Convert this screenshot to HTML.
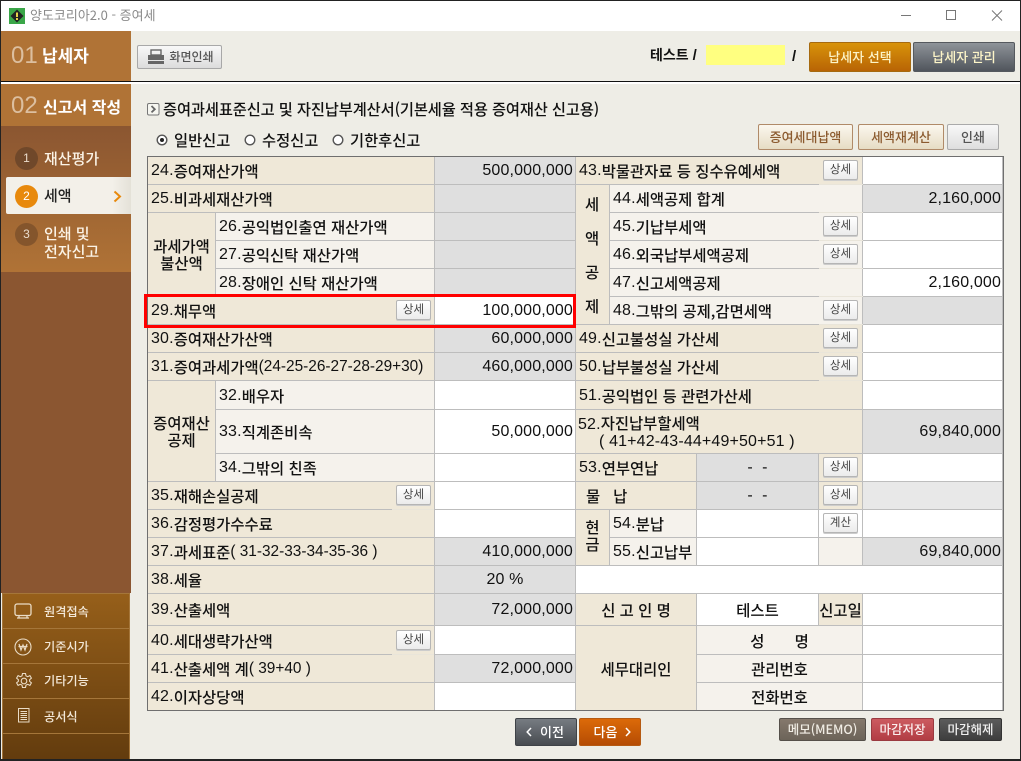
<!DOCTYPE html>
<html lang="ko"><head><meta charset="utf-8"><title>양도코리아2.0 - 증여세</title>
<style>
*{box-sizing:border-box;margin:0;padding:0}
html,body{width:1021px;height:761px;overflow:hidden;background:#222}
body{position:relative;font-family:"Noto Sans CJK KR","Liberation Sans",sans-serif;font-size:15.4px;color:#111}
div,span.t,span.n,svg{position:absolute}
i{font-style:normal;font-family:"Liberation Sans",sans-serif;font-size:16px;letter-spacing:.15px;font-weight:400}
i.p{font-size:15.4px;letter-spacing:0}
.t{white-space:nowrap;line-height:18px}
.c{display:flex;align-items:center;white-space:nowrap;border-right:1px solid #bdbdbd;border-bottom:1px solid #bdbdbd;padding-left:3px;padding-top:1px;line-height:18px;font-weight:500}
.a{background:#efe8d8}.b{background:#f5f2ec}.g{background:#dfdfdf}.w{background:#fff}
.r{justify-content:flex-end;padding:1px 1px 0 0}
[style*="left:435px"].r{padding-right:2px}
.m{justify-content:center;padding:1px 0 0;text-align:center}
.d{width:35px;height:20px;border:1px solid #b5b5b5;border-radius:2px;background:linear-gradient(#fff,#ebebeb);font-size:11.5px;line-height:17px;text-align:center;color:#444;box-shadow:0 1px 0 #ccc}
.n{color:#f3e8d8;font-size:12.2px;font-weight:500;left:44px;line-height:16px;white-space:nowrap}
.btn{text-align:center;white-space:nowrap;border-radius:2px;font-weight:500}
.e{height:1px;background:#e9e5da;width:44px;left:819px}
.s{color:#fbf3e6;font-weight:500;font-size:15px}
b{font-family:"Liberation Sans",sans-serif;font-weight:700;font-size:15px}
</style></head><body>
<div style="left:1px;top:1px;width:1019px;height:758px;background:#eeede6;overflow:hidden"></div>
<!-- title bar -->
<div style="left:1px;top:1px;width:1019px;height:30px;background:#fff"></div>
<svg style="left:9px;top:8px" width="16" height="16" viewBox="0 0 16 16"><rect width="16" height="16" fill="#3aa648"/><path d="M8 1.5 14.5 8 8 14.5 1.5 8Z" fill="#222"/><rect x="7" y="4.5" width="2" height="4.5" fill="#e9d24a"/><rect x="7" y="10" width="2" height="2" fill="#e9d24a"/></svg>
<span class="t" style="left:30px;top:6px;color:#8a8a8a;font-size:13px">양도코리아2.0 - 증여세</span>
<svg style="left:900px;top:8px" width="110" height="15" viewBox="0 0 110 15" fill="none" stroke="#777"><path d="M1 7.5H11"/><rect x="46.5" y="2.5" width="9" height="9"/><path d="M92 2.5 102 12.5M102 2.5 92 12.5"/></svg>
<!-- header -->
<div style="left:1px;top:81px;width:1019px;height:1px;background:#111"></div>
<div style="left:1px;top:82px;width:1019px;height:2px;background:#fff"></div>
<!-- sidebar -->
<div style="left:1px;top:31px;width:130px;height:50px;background:#b07336"></div>
<span class="t" style="left:11px;top:42px;font:24px/28px 'Liberation Sans',sans-serif;color:#dcbfa0">01</span>
<span class="t" style="left:42px;top:46px;font-size:17px;font-weight:700;color:#fff">납세자</span>
<div style="left:1px;top:84px;width:130px;height:42px;background:#b07336"></div>
<span class="t" style="left:11px;top:92px;font:24px/28px 'Liberation Sans',sans-serif;color:#dcbfa0">02</span>
<span class="t" style="left:43px;top:97px;font-size:16px;font-weight:700;color:#fff">신고서 작성</span>
<div style="left:1px;top:126px;width:130px;height:467px;background:#8b5631"></div>
<div style="left:1px;top:126px;width:130px;height:146px;background:linear-gradient(#8b5631,#b07336)"></div>
<div style="left:6px;top:177px;width:125px;height:37px;background:linear-gradient(90deg,#f3f0e9 85%,#e4e1d8);border-radius:2px 0 0 2px"></div>
<div style="left:15px;top:147px;width:23px;height:23px;border-radius:50%;background:#70482a;color:#eadccc;font:12px/23px 'Liberation Sans',sans-serif;text-align:center">1</div>
<span class="t s" style="left:44px;top:150px">재산평가</span>
<div style="left:15px;top:185px;width:23px;height:23px;border-radius:50%;background:#e8890c;color:#fff;font:12px/23px 'Liberation Sans',sans-serif;text-align:center">2</div>
<span class="t s" style="left:44px;top:187px;color:#222">세액</span>
<svg style="left:113px;top:190px" width="9" height="13" viewBox="0 0 9 13" fill="none" stroke="#e8890c" stroke-width="2"><path d="M1.5 1.5 7 6.5 1.5 11.5"/></svg>
<div style="left:15px;top:223px;width:23px;height:23px;border-radius:50%;background:#84552c;color:#eadccc;font:12px/23px 'Liberation Sans',sans-serif;text-align:center">3</div>
<span class="t s" style="left:44px;top:225px">인쇄 및</span>
<span class="t s" style="left:44px;top:243px">전자신고</span>
<div style="left:2px;top:593px;width:128px;height:166px;background:linear-gradient(#965f1a,#633c0e);border:1px solid #a5763a;border-bottom:0"></div>
<div style="left:2px;top:628px;width:128px;height:1px;background:#a5763a"></div>
<div style="left:2px;top:663px;width:128px;height:1px;background:#a5763a"></div>
<div style="left:2px;top:698px;width:128px;height:1px;background:#a5763a"></div>
<div style="left:2px;top:733px;width:128px;height:1px;background:#a5763a"></div>
<svg style="left:14px;top:603px" width="20" height="18" viewBox="0 0 20 18" fill="none" stroke="#eadcc6" stroke-width="1.3"><rect x="1" y="1" width="16" height="11.5" rx="2"/><path d="M3 15H15M5 12.5V15M13 12.5V15"/></svg>
<span class="n" style="top:603px">원격접속</span>
<svg style="left:14px;top:638px" width="18" height="18" viewBox="0 0 18 18" fill="none" stroke="#eadcc6" stroke-width="1.1"><circle cx="9" cy="9" r="8"/><path d="M5 6 7 12 9 7 11 12 13 6M4.5 8.5H13.5" stroke-width="1.2"/></svg>
<span class="n" style="top:638px">기준시가</span>
<svg style="left:15px;top:672px" width="18" height="18" viewBox="0 0 18 18" fill="none" stroke="#eadcc6" stroke-width="1.1"><circle cx="9" cy="9" r="2.8"/><path d="M7.5 1.5h3l.5 2.4 1.7.8 2.2-1.1 1.5 2.5-1.8 1.6v1.6l1.8 1.6-1.5 2.5-2.2-1.1-1.7.8-.5 2.4h-3l-.5-2.4-1.7-.8-2.2 1.1-1.5-2.5 1.8-1.6V7.7L1.6 6.1l1.5-2.5 2.2 1.1L7 3.9Z"/></svg>
<span class="n" style="top:672px">기타기능</span>
<svg style="left:18px;top:708px" width="12" height="15" viewBox="0 0 12 15" fill="none" stroke="#eadcc6"><rect x=".5" y=".5" width="10.5" height="13.5"/><path d="M2.5 3.5H9M2.5 5.5H9M2.5 7.5H9M2.5 9.5H9M2.5 11.5H9"/></svg>
<span class="n" style="top:708px">공서식</span>
<!-- toolbar -->
<div class="btn" style="left:137px;top:45px;width:85px;height:24px;border:1px solid #a8a8a8;background:linear-gradient(#f8f8f8,#dcdcdc);color:#555;font-size:12px;line-height:21px;padding-left:24px">화면인쇄</div>
<svg style="left:147px;top:49px" width="18" height="16" viewBox="0 0 18 16"><rect x="4" y="1" width="10" height="5" fill="none" stroke="#666" stroke-width="1.4"/><rect x="1" y="6" width="16" height="5" fill="#666"/><rect x="1" y="12" width="16" height="3" fill="#666"/></svg>
<span class="t" style="left:650px;top:46px;font-weight:700;color:#111;font-size:14px">테스트 <b>/</b></span>
<div style="left:706px;top:45px;width:79px;height:20px;background:#ffff80"></div>
<span class="t" style="left:792px;top:46px;color:#111"><b>/</b></span>
<div class="btn" style="left:809px;top:42px;width:102px;height:30px;border:1px solid #a66a10;background:linear-gradient(#d8930a,#b86405);color:#fdf5c8;font-size:13px;line-height:27px">납세자 선택</div>
<div class="btn" style="left:913px;top:42px;width:102px;height:30px;border:1px solid #55595e;background:linear-gradient(#8e9399,#50555c);color:#fdf5c8;font-size:13px;line-height:27px">납세자 관리</div>
<!-- heading -->
<svg style="left:147px;top:103px" width="13" height="13" viewBox="0 0 13 13" fill="none"><rect x=".5" y=".5" width="11.5" height="11.5" rx="1.5" fill="#f6f6f0" stroke="#777"/><path d="M4.5 3 7.8 6.2 4.5 9.4" stroke="#666" stroke-width="1.8"/></svg>
<span class="t" style="left:163px;top:100px;font-size:15.3px;font-weight:500;letter-spacing:-.12px">증여과세표준신고 및 자진납부계산서(기본세율 적용 증여재산 신고용)</span>
<svg style="left:155px;top:133px" width="190" height="14" viewBox="0 0 190 14" fill="#fff" stroke="#555" stroke-width="1.4"><circle cx="7" cy="7" r="4.8"/><circle cx="7" cy="7" r="2" fill="#222" stroke="none"/><circle cx="95" cy="7" r="4.8"/><circle cx="183" cy="7" r="4.8"/></svg>
<span class="t" style="left:174px;top:131px;font-size:15.3px;font-weight:500">일반신고</span>
<span class="t" style="left:262px;top:131px;font-size:15.3px;font-weight:500">수정신고</span>
<span class="t" style="left:350px;top:131px;font-size:15.3px;font-weight:500">기한후신고</span>
<div class="btn" style="left:758px;top:124px;width:95px;height:26px;border:1px solid #b08a68;background:linear-gradient(#fbf7ee,#e6dcc4);color:#8b5a2e;font-size:13px;line-height:23px">증여세대납액</div>
<div class="btn" style="left:858px;top:124px;width:86px;height:26px;border:1px solid #b08a68;background:linear-gradient(#fbf7ee,#e6dcc4);color:#8b5a2e;font-size:13px;line-height:23px">세액재계산</div>
<div class="btn" style="left:947px;top:124px;width:52px;height:26px;border:1px solid #aaa;background:linear-gradient(#f8f8f8,#dedede);color:#555;font-size:13px;line-height:23px">인쇄</div>

<!-- left table -->
<div class="c a" style="left:148px;top:157px;width:287px;height:28px"><i>24.</i>증여재산가액</div>
<div class="c g r" style="left:435px;top:157px;width:141px;height:28px"><i>500,000,000</i></div>
<div class="c a" style="left:148px;top:185px;width:287px;height:28px"><i>25.</i>비과세재산가액</div>
<div class="c g r" style="left:435px;top:185px;width:141px;height:28px"></div>
<div class="c a m" style="left:148px;top:213px;width:68px;height:84px;line-height:17px">과세가액<br>불산액</div>
<div class="c b" style="left:216px;top:213px;width:219px;height:28px"><i>26.</i>공익법인출연 재산가액</div>
<div class="c g" style="left:435px;top:213px;width:141px;height:28px"></div>
<div class="c b" style="left:216px;top:241px;width:219px;height:28px"><i>27.</i>공익신탁 재산가액</div>
<div class="c g" style="left:435px;top:241px;width:141px;height:28px"></div>
<div class="c b" style="left:216px;top:269px;width:219px;height:28px"><i>28.</i>장애인 신탁 재산가액</div>
<div class="c g" style="left:435px;top:269px;width:141px;height:28px"></div>
<div class="c a" style="left:148px;top:297px;width:287px;height:28px"><i>29.</i>채무액</div>
<div class="c w r" style="left:435px;top:297px;width:141px;height:28px"><i>100,000,000</i></div>
<div class="c a" style="left:148px;top:325px;width:287px;height:28px"><i>30.</i>증여재산가산액</div>
<div class="c g r" style="left:435px;top:325px;width:141px;height:28px"><i>60,000,000</i></div>
<div class="c a" style="left:148px;top:353px;width:287px;height:28px"><i>31.</i>증여과세가액<i class="p">(24-25-26-27-28-29+30)</i></div>
<div class="c g r" style="left:435px;top:353px;width:141px;height:28px"><i>460,000,000</i></div>
<div class="c a m" style="left:148px;top:381px;width:68px;height:101px;line-height:17px">증여재산<br>공제</div>
<div class="c b" style="left:216px;top:381px;width:219px;height:29px"><i>32.</i>배우자</div>
<div class="c w" style="left:435px;top:381px;width:141px;height:29px"></div>
<div class="c b" style="left:216px;top:410px;width:219px;height:44px"><i>33.</i>직계존비속</div>
<div class="c w r" style="left:435px;top:410px;width:141px;height:44px"><i>50,000,000</i></div>
<div class="c b" style="left:216px;top:454px;width:219px;height:28px"><i>34.</i>그밖의 친족</div>
<div class="c w" style="left:435px;top:454px;width:141px;height:28px"></div>
<div class="c a" style="left:148px;top:482px;width:287px;height:28px"><i>35.</i>재해손실공제</div>
<div class="c w" style="left:435px;top:482px;width:141px;height:28px"></div>
<div class="c a" style="left:148px;top:510px;width:287px;height:28px"><i>36.</i>감정평가수수료</div>
<div class="c w" style="left:435px;top:510px;width:141px;height:28px"></div>
<div class="c a" style="left:148px;top:538px;width:287px;height:28px"><i>37.</i>과세표준<i class="p">( 31-32-33-34-35-36 )</i></div>
<div class="c g r" style="left:435px;top:538px;width:141px;height:28px"><i>410,000,000</i></div>
<div class="c a" style="left:148px;top:566px;width:287px;height:28px"><i>38.</i>세율</div>
<div class="c g m" style="left:435px;top:566px;width:141px;height:28px"><i>20 %</i></div>
<div class="c a" style="left:148px;top:594px;width:287px;height:32px"><i>39.</i>산출세액</div>
<div class="c g r" style="left:435px;top:594px;width:141px;height:32px"><i>72,000,000</i></div>
<div class="c a" style="left:148px;top:626px;width:287px;height:29px"><i>40.</i>세대생략가산액</div>
<div class="c w" style="left:435px;top:626px;width:141px;height:29px"></div>
<div class="c a" style="left:148px;top:655px;width:287px;height:28px"><i>41.</i>산출세액 계<i class="p">( 39+40 )</i></div>
<div class="c g r" style="left:435px;top:655px;width:141px;height:28px"><i>72,000,000</i></div>
<div class="c a" style="left:148px;top:683px;width:287px;height:28px"><i>42.</i>이자상당액</div>
<div class="c w" style="left:435px;top:683px;width:141px;height:28px"></div>

<!-- right table -->
<div class="c a" style="left:576px;top:157px;width:287px;height:28px"><i>43.</i>박물관자료 등 징수유예세액</div>
<div class="c w" style="left:863px;top:157px;width:140px;height:28px"></div>
<div class="c a" style="left:576px;top:185px;width:34px;height:140px"></div>
<span class="t" style="left:585px;top:195px;font-weight:500">세</span>
<span class="t" style="left:585px;top:229px;font-weight:500">액</span>
<span class="t" style="left:585px;top:263px;font-weight:500">공</span>
<span class="t" style="left:585px;top:297px;font-weight:500">제</span>
<div class="c b" style="left:610px;top:185px;width:253px;height:28px"><i>44.</i>세액공제 합계</div>
<div class="c g r" style="left:863px;top:185px;width:140px;height:28px"><i>2,160,000</i></div>
<div class="c b" style="left:610px;top:213px;width:253px;height:28px"><i>45.</i>기납부세액</div>
<div class="c w" style="left:863px;top:213px;width:140px;height:28px"></div>
<div class="c b" style="left:610px;top:241px;width:253px;height:28px"><i>46.</i>외국납부세액공제</div>
<div class="c w" style="left:863px;top:241px;width:140px;height:28px"></div>
<div class="c b" style="left:610px;top:269px;width:253px;height:28px"><i>47.</i>신고세액공제</div>
<div class="c w r" style="left:863px;top:269px;width:140px;height:28px"><i>2,160,000</i></div>
<div class="c b" style="left:610px;top:297px;width:253px;height:28px"><i>48.</i>그밖의 공제,감면세액</div>
<div class="c g" style="left:863px;top:297px;width:140px;height:28px"></div>
<div class="c a" style="left:576px;top:325px;width:287px;height:28px"><i>49.</i>신고불성실 가산세</div>
<div class="c w" style="left:863px;top:325px;width:140px;height:28px"></div>
<div class="c a" style="left:576px;top:353px;width:287px;height:28px"><i>50.</i>납부불성실 가산세</div>
<div class="c w" style="left:863px;top:353px;width:140px;height:28px"></div>
<div class="c a" style="left:576px;top:381px;width:287px;height:29px"><i>51.</i>공익법인 등 관련가산세</div>
<div class="c w" style="left:863px;top:381px;width:140px;height:29px"></div>
<div class="c a" style="left:576px;top:410px;width:287px;height:44px"></div>
<span class="t" style="left:578px;top:414px;font-weight:500"><i>52.</i>자진납부할세액</span>
<span class="t" style="left:599px;top:431px"><i>( 41+42-43-44+49+50+51 )</i></span>
<div class="c g r" style="left:863px;top:410px;width:140px;height:44px"><i>69,840,000</i></div>
<div class="c a" style="left:576px;top:454px;width:121px;height:28px"><i>53.</i>연부연납</div>
<div class="c g m" style="left:697px;top:454px;width:122px;height:28px"><i>- &nbsp;-</i></div>
<div class="c a" style="left:819px;top:454px;width:44px;height:28px"></div>
<div class="c w" style="left:863px;top:454px;width:140px;height:28px"></div>
<div class="c a" style="left:576px;top:482px;width:121px;height:28px;padding-left:10px">물 &nbsp; 납</div>
<div class="c g m" style="left:697px;top:482px;width:122px;height:28px"><i>- &nbsp;-</i></div>
<div class="c a" style="left:819px;top:482px;width:44px;height:28px"></div>
<div class="c" style="left:863px;top:482px;width:140px;height:28px;background:#e8e8e8"></div>
<div class="c a m" style="left:576px;top:510px;width:34px;height:56px;line-height:17px;padding-bottom:4px">현<br>금</div>
<div class="c b" style="left:610px;top:510px;width:87px;height:28px"><i>54.</i>분납</div>
<div class="c w" style="left:697px;top:510px;width:122px;height:28px"></div>
<div class="c w" style="left:819px;top:510px;width:44px;height:28px"></div>
<div class="c w" style="left:863px;top:510px;width:140px;height:28px"></div>
<div class="c b" style="left:610px;top:538px;width:87px;height:28px"><i>55.</i>신고납부</div>
<div class="c w" style="left:697px;top:538px;width:122px;height:28px"></div>
<div class="c b" style="left:819px;top:538px;width:44px;height:28px"></div>
<div class="c g r" style="left:863px;top:538px;width:140px;height:28px"><i>69,840,000</i></div>
<div class="c w" style="left:576px;top:566px;width:427px;height:28px"></div>
<div class="c a m" style="left:576px;top:594px;width:121px;height:32px">신 고 인 명</div>
<div class="c w m" style="left:697px;top:594px;width:122px;height:32px">테스트</div>
<div class="c a m" style="left:819px;top:594px;width:44px;height:32px">신고일</div>
<div class="c w" style="left:863px;top:594px;width:140px;height:32px"></div>
<div class="c a m" style="left:576px;top:626px;width:121px;height:85px">세무대리인</div>
<div class="c b m" style="left:697px;top:626px;width:166px;height:29px;white-space:pre">성       명</div>
<div class="c w" style="left:863px;top:626px;width:140px;height:29px"></div>
<div class="c b m" style="left:697px;top:655px;width:166px;height:28px">관리번호</div>
<div class="c w" style="left:863px;top:655px;width:140px;height:28px"></div>
<div class="c b m" style="left:697px;top:683px;width:166px;height:28px">전화번호</div>
<div class="c w" style="left:863px;top:683px;width:140px;height:28px"></div>

<!-- lighter dividers under button cells -->
<div class="e" style="top:184px"></div><div class="e" style="top:212px"></div><div class="e" style="top:240px"></div><div class="e" style="top:268px"></div><div class="e" style="top:296px"></div><div class="e" style="top:324px"></div><div class="e" style="top:352px"></div><div class="e" style="top:380px"></div>
<div class="e" style="left:392px;top:509px;width:42px"></div><div class="e" style="left:392px;top:654px;width:42px"></div>
<!-- outer border, red highlight -->
<div style="left:147px;top:156px;width:857px;height:555px;border:1px solid #6f6f6f"></div>
<div style="left:144px;top:294px;width:432px;height:34px;border:3px solid #f00"></div>
<!-- detail buttons -->
<div class="d" style="left:396px;top:300px">상세</div>
<div class="d" style="left:396px;top:485px">상세</div>
<div class="d" style="left:396px;top:630px">상세</div>
<div class="d" style="left:823px;top:160px">상세</div>
<div class="d" style="left:823px;top:216px">상세</div>
<div class="d" style="left:823px;top:244px">상세</div>
<div class="d" style="left:823px;top:300px">상세</div>
<div class="d" style="left:823px;top:328px">상세</div>
<div class="d" style="left:823px;top:356px">상세</div>
<div class="d" style="left:823px;top:457px">상세</div>
<div class="d" style="left:823px;top:485px">상세</div>
<div class="d" style="left:823px;top:513px">계산</div>
<!-- bottom buttons -->
<div class="btn" style="left:515px;top:718px;width:62px;height:28px;border:1px solid #3e4247;background:linear-gradient(#777c82,#474b50);color:#fff;font-size:13px;line-height:25px;padding-left:12px">이전</div>
<svg style="left:526px;top:727px" width="6" height="10" viewBox="0 0 6 10" fill="none" stroke="#fff" stroke-width="1.5"><path d="M5 1 1.2 5 5 9"/></svg>
<div class="btn" style="left:579px;top:718px;width:62px;height:28px;border:1px solid #b55a12;background:linear-gradient(#dc6a08,#b54c04);color:#fff;font-size:13px;line-height:25px;padding-right:9px">다음</div>
<svg style="left:625px;top:727px" width="6" height="10" viewBox="0 0 6 10" fill="none" stroke="#fff" stroke-width="1.5"><path d="M1 1 4.8 5 1 9"/></svg>
<div class="btn" style="left:779px;top:718px;width:87px;height:23px;border:1px solid #55504a;background:linear-gradient(#85796c,#6c6459);color:#f0ece4;font-size:12.5px;line-height:20px">메모(MEMO)</div>
<div class="btn" style="left:871px;top:718px;width:63px;height:23px;border:1px solid #9a3a40;background:linear-gradient(#cc5b60,#b23d44);color:#fbeeee;font-size:12.5px;line-height:20px">마감저장</div>
<div class="btn" style="left:939px;top:718px;width:63px;height:23px;border:1px solid #333;background:linear-gradient(#5c5c5c,#3e3e3e);color:#f0f0f0;font-size:12.5px;line-height:20px">마감해제</div>
</body></html>
